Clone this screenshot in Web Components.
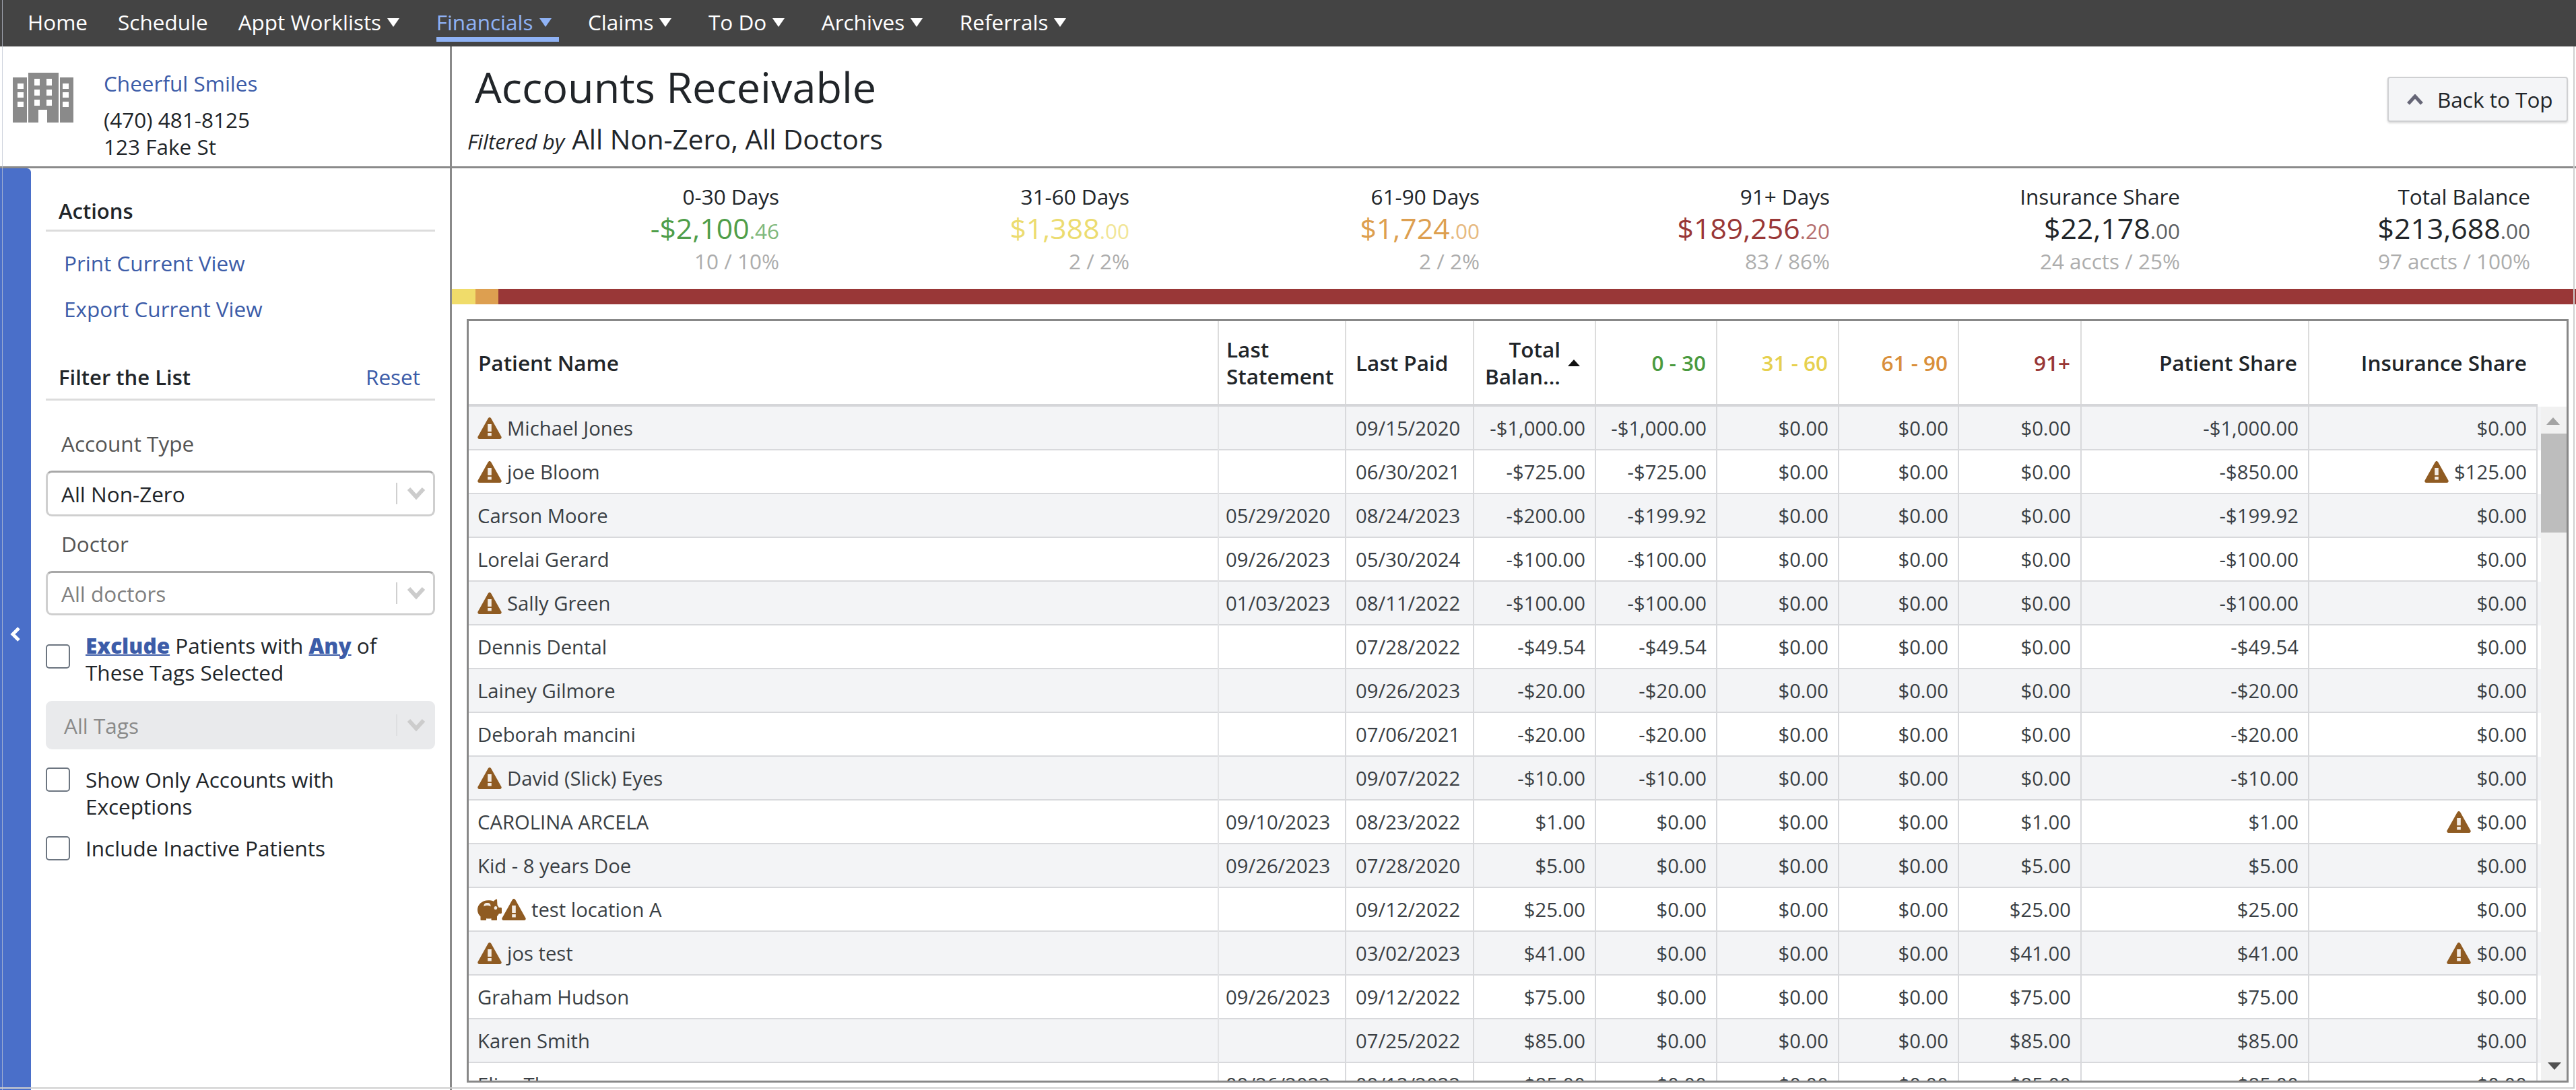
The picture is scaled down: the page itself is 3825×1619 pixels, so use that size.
<!DOCTYPE html>
<html><head><meta charset="utf-8"><title>Accounts Receivable</title>
<style>
html,body{margin:0;padding:0;background:#fff;height:100%;overflow:hidden}
body{font-family:"Open Sans","Noto Sans",sans-serif;font-size:31.5px;color:#212529}
</style></head><body>
<ar-app>
  <ar-nav slot="nav"></ar-nav>
  <ar-practice slot="practice"></ar-practice>
  <ar-title slot="title"></ar-title>
  <ar-sidebar slot="side"></ar-sidebar>
  <ar-summary slot="summary"></ar-summary>
  <ar-table slot="table"></ar-table>
</ar-app>
<script>
const WARN=`<svg viewBox="0 0 36 32" width="36" height="32" style="flex:none;display:block"><path d="M18 0c1 0 1.800.6 2.300 1.500L35.400 28.600c.9 1.700-.2 3.400-2 3.400H2.600c-1.800 0-2.900-1.700-2-3.400L15.700 1.500C16.200.6 17 0 18 0z" fill="#8f5b22"/><rect x="15.200" y="10" width="5.600" height="11" fill="#f3ece4"/><rect x="15.200" y="23" width="5.600" height="4.500" fill="#f3ece4"/></svg>`;
const PIG=`<svg viewBox="0 0 36 32" width="36" height="32" style="flex:none;display:block;margin-right:-8px"><path d="M29 .5c-2.500.5-4 2-5 3.200C21.500 2.600 19 2.200 16 2.200 7 2.200 0 8.500 0 16.200c0 4.200 1.800 7.500 4.500 10V31c0 .6.400 1 1 1h6.500c.6 0 1-.4 1-1v-1.800c2.500.5 5 .5 7.500.1V31c0 .6.400 1 1 1h6.500c.6 0 1-.4 1-1v-5c1.300-1.200 2.300-2.500 3-4h2.500c1 0 1.500-.6 1.500-1.500v-6c0-1-.5-1.500-1.500-1.500h-2.800c-.6-1.400-1.400-2.600-2.200-3.600z" fill="#8f5b22"/><path d="M9.500 11.500c-.5-3.500 1.500-5.500 5-5.500s5.500 2 5 5.500c-2-2-8-2-10 0z" fill="#f3ece4"/><ellipse cx="27" cy="13.500" rx="2.300" ry="2.600" fill="#f3ece4"/></svg>`;
const CHEV=`<svg viewBox="0 0 28 20" width="28" height="20" style="display:block"><path d="M3 3l11 12L25 3" fill="none" stroke="#cccccc" stroke-width="6"/></svg>`;

function def(name,css,html){
  customElements.define(name,class extends HTMLElement{
    constructor(){super();const s=this.attachShadow({mode:'open'});s.innerHTML=`<style>${css}</style>`+(typeof html==='function'?html(this):html);}
  });
}

def('ar-app',`
:host{display:grid;grid-template-columns:671px 1fr;grid-template-rows:69px 181px 1fr;height:1619px;width:3825px;box-sizing:border-box;overflow:hidden;position:relative}
.nav{grid-column:1/3}
.pr{border-right:3px solid #8a8a8a;border-bottom:3px solid #8a8a8a;box-sizing:border-box}
.ti{border-bottom:3px solid #8a8a8a;box-sizing:border-box}
.si{border-right:3px solid #8a8a8a;box-sizing:border-box;min-height:0;overflow:hidden}
.ma{min-height:0;overflow:hidden;display:flex;flex-direction:column}
.edge{position:absolute;pointer-events:none;background:#cfcfcf}
.l{left:3px;top:0;bottom:0;width:1px;background:rgba(190,195,210,.75)}
.r{right:2px;top:69px;bottom:2px;width:2px}
.b{left:0;right:2px;bottom:2px;height:2px}
`,`<div class="nav"><slot name="nav"></slot></div><div class="pr"><slot name="practice"></slot></div><div class="ti"><slot name="title"></slot></div><div class="si"><slot name="side"></slot></div><div class="ma"><slot name="summary"></slot><slot name="table"></slot></div><i class="edge l"></i><i class="edge r"></i><i class="edge b"></i>`);

def('ar-nav',`
:host{display:flex;height:69px;background:#444;color:#fff;padding-left:41px;box-sizing:border-box;font-size:31.5px;align-items:flex-start}
.i{display:flex;align-items:center;height:69px;position:relative;padding-bottom:4px;box-sizing:border-box;margin-right:45px;white-space:nowrap}
.m{padding-right:11px;margin-right:43.5px}
.i i{display:block;width:0;height:0;border-left:9px solid transparent;border-right:9px solid transparent;border-top:13px solid currentColor;margin-left:9px;margin-top:2px}
.a{color:#8fb2f5}
.a::after{content:"";position:absolute;left:0;right:0;top:55px;height:7px;background:#8fb2f5}
`,`<div class="i">Home</div><div class="i">Schedule</div><div class="i m">Appt Worklists<i></i></div><div class="i m a">Financials<i></i></div><div class="i m">Claims<i></i></div><div class="i m">To Do<i></i></div><div class="i m">Archives<i></i></div><div class="i m">Referrals<i></i></div>`);

def('ar-practice',`
:host{display:flex;padding:39px 0 0 19px;box-sizing:border-box;height:178px;font-size:31.5px}
svg{flex:none;display:block;width:90px;height:74px;margin-right:45px}
.t{display:flex;flex-direction:column;line-height:40px;margin-top:-4px}
.n{color:#3c5ca8;margin-bottom:14px}
`,`<svg viewBox="0 0 90 74"><path fill="#8a8a8a" d="M0 7h21v67H0zM23 0h45v74H51V55H38v19H23zM70 7h20v67H70z"/><g fill="#fff"><rect x="7" y="16" width="9" height="8"/><rect x="7" y="29" width="9" height="8"/><rect x="7" y="43" width="9" height="8"/><rect x="74" y="16" width="9" height="8"/><rect x="74" y="29" width="9" height="8"/><rect x="74" y="43" width="9" height="8"/><rect x="32" y="9" width="8" height="10"/><rect x="50" y="9" width="8" height="10"/><rect x="32" y="25" width="8" height="9"/><rect x="50" y="25" width="8" height="9"/><rect x="32" y="40" width="8" height="9"/><rect x="50" y="40" width="8" height="9"/></g></svg><div class="t"><div class="n">Cheerful Smiles</div><div>(470) 481-8125</div><div>123 Fake St</div></div>`);

def('ar-title',`
:host{display:flex;justify-content:space-between;height:178px;box-sizing:border-box;padding:0 12px 0 23px;position:relative}
h1{margin:18px 0 0 11px;font-size:63px;font-weight:400;line-height:84px;color:#212529;white-space:nowrap}
.f{margin-top:11px;display:flex;align-items:baseline;white-space:nowrap;font-size:40.5px;line-height:50px}
.f em{font-size:31.5px;margin-right:11px}
button{all:unset;box-sizing:border-box;display:flex;align-items:center;width:268px;height:67px;margin-top:45px;background:#f4f5f7;border:2px solid #cfd0d2;border-radius:4px;box-shadow:0 2px 3px rgba(0,0,0,.15);font-size:31.5px;color:#212529;padding-left:27px;white-space:nowrap}
svg{width:24px;height:16px;margin-right:21px}
`,`<div><h1>Accounts Receivable</h1><div class="f"><em>Filtered by</em>All Non-Zero, All Doctors</div></div><button><svg viewBox="0 0 24 16"><path d="M2 14L12 3l10 11" fill="none" stroke="#667" stroke-width="5"/></svg>Back to Top</button>`);

def('ar-sidebar',`
:host{display:flex;height:100%;box-sizing:border-box;font-size:31.5px}
.strip{width:46px;flex:none;background:#4a6fc9;border-top-right-radius:6px;display:flex;justify-content:center;padding-top:681px;box-sizing:border-box}
.strip svg{width:16px;height:22px;display:block}
.c{flex:none;width:578px;margin-left:22px;box-sizing:border-box;padding-top:42px}
.h{display:flex;justify-content:space-between;padding:0 22px 0 19px;border-bottom:3px solid #dcdcdc;height:52px;line-height:42px;font-weight:600;color:#212529;box-sizing:border-box;font-size:31px}
.h a{font-weight:400;font-size:31.5px}
a{color:#3c5ca8;text-decoration:none}
.l{display:block;margin-left:27px;line-height:40px}
.lb{margin-left:23px;color:#555;line-height:40px}
.sel{display:flex;align-items:center;height:68px;border:3px solid #cfcfcf;border-top-color:#a8a8a8;border-radius:9px;box-sizing:border-box;padding-left:20px;color:#212529}
.sel span{flex:1}
.sel b{display:block;width:2px;height:32px;background:#d0d0d0;margin-right:14px}
.sel svg{margin-right:11px}
.dis{color:#808080}
.tag{background:#e9eaec;border:0;height:72px;color:#8a8a8a;padding-left:27px}
.tag b{background:#dedfe1;margin-left:0}
.tag svg{margin-right:14px}
.ck{display:grid;grid-template-columns:36px 480px;column-gap:23px;line-height:40px;color:#212529}
.ck i{display:block;width:36px;height:36px;border:2px solid #6c7580;border-radius:5px;box-sizing:border-box;background:#fff;margin-top:2px}
u{font-weight:800;color:#3c5ca8;text-decoration-thickness:2px}
`,`<div class="strip"><svg viewBox="0 0 16 22"><path d="M13 2L4 11l9 9" fill="none" stroke="#fff" stroke-width="5"/></svg></div>
<div class="c">
<div class="h">Actions</div>
<a class="l" style="margin-top:27px">Print Current View</a>
<a class="l" style="margin-top:28px">Export Current View</a>
<div class="h" style="margin-top:60px;height:56px"><span>Filter the List</span><a>Reset</a></div>
<div class="lb" style="margin-top:44px">Account Type</div>
<div class="sel" style="margin-top:20px"><span>All Non-Zero</span><b></b>${CHEV}</div>
<div class="lb" style="margin-top:21px">Doctor</div>
<div class="sel dis" style="margin-top:20px;height:66px"><span>All doctors</span><b></b>${CHEV}</div>
<div class="ck" style="margin-top:25px"><i style="margin-top:18px"></i><div><u>Exclude</u> Patients with <u>Any</u> of These Tags Selected</div></div>
<div class="sel tag" style="margin-top:22px"><span>All Tags</span><b></b>${CHEV}</div>
<div class="ck" style="margin-top:25px"><i></i><div>Show Only Accounts with Exceptions</div></div>
<div class="ck" style="margin-top:22px"><i></i><div>Include Inactive Patients</div></div>
</div>`);

def('ar-summary',`
:host{display:block;flex:none}
.g{display:grid;grid-template-columns:486px repeat(5,520px);height:179px;box-sizing:border-box;padding-top:21px;text-align:right}
.l{font-size:31.5px;line-height:42px;color:#212529}
.a{font-size:42.75px;line-height:51px}
.a small{font-size:31.5px;opacity:.72}
.s{font-size:31.5px;line-height:40px;color:#adadad}
.bar{display:flex;height:23px;background:#993737}
.bar i{display:block}
`,()=>{
 const d=[['0-30 Days','-$2,100','.46','10 / 10%','#4f9e4a'],['31-60 Days','$1,388','.00','2 / 2%','#ecdc70'],['61-90 Days','$1,724','.00','2 / 2%','#dd9f50'],['91+ Days','$189,256','.20','83 / 86%','#993737'],['Insurance Share','$22,178','.00','24 accts / 25%','#212529'],['Total Balance','$213,688','.00','97 accts / 100%','#212529']];
 return `<div class="g">`+d.map(x=>`<div><div class="l">${x[0]}</div><div class="a" style="color:${x[4]}">${x[1]}<small>${x[2]}</small></div><div class="s">${x[3]}</div></div>`).join('')+`</div><div class="bar"><i style="width:35px;background:#f0dc6a"></i><i style="width:34px;background:#dd9f50"></i></div>`;
});

const COLS='1114px 189px 190px 181px 180px 181px 178px 182px 338px 339px';
def('ar-row',`
:host{display:grid;grid-template-columns:${COLS} 5px;width:3077px;height:65px;box-sizing:border-box;font-size:29.25px;color:#3a3f44;background:linear-gradient(#d8d9dc,#d8d9dc) left bottom/3072px 2px no-repeat,var(--bg,#fff)}
div{display:flex;align-items:center;justify-content:flex-end;padding:0 14px 2px;box-sizing:border-box;border-right:2px solid #d8d9dc;white-space:nowrap;gap:8px;overflow:visible}
div:nth-of-type(1),div:nth-of-type(2),div:nth-of-type(3){justify-content:flex-start}
div:nth-of-type(1){padding-left:13px;border-right-color:#e2e3e5}
div:nth-of-type(2){padding-left:10px}
div:last-of-type{border-right:0}
`,(el)=>{
  const d=JSON.parse(el.getAttribute('data'));
  const ic=s=>(s||'').replace('{w}',WARN).replace('{p}',PIG).replace(/>([^<>]+)$/,'><span>$1</span>');
  return d.map(c=>`<div>${ic(c)}</div>`).join('');
});

def('ar-table',`
:host{display:block;margin:22px 11px 0 22px;height:1134px;border:3px solid #888;box-sizing:border-box;overflow:hidden;position:relative;flex:none}
.hd{display:grid;grid-template-columns:${COLS};height:127px;border-bottom:4px solid #d5d6d9;box-sizing:border-box;font-weight:600;font-size:31.5px;line-height:40px;color:#212529;width:3072px}
.hd div{display:flex;align-items:center;padding:0 15px 0 14px;box-sizing:border-box;border-right:2px solid #dcdcdc;justify-content:flex-end;text-align:right}
.hd div.lf{justify-content:flex-start;text-align:left}
.hd div:last-child{border-right:0;padding-right:16px}
.hd svg{margin-left:11px;flex:none}
.body{display:flex;height:1004px;overflow:hidden}
.rows{width:3077px;flex:none}
.sb{flex:1;background:#f1f1f1;position:relative}
.sb .t{position:absolute;left:0;right:0;top:40px;height:147px;background:#bdbdbd}
.sb .u{position:absolute;left:8px;top:16px;width:0;height:0;border-left:10px solid transparent;border-right:10px solid transparent;border-bottom:11px solid #a3a3a3}
.sb .d{position:absolute;left:10px;top:974px;width:0;height:0;border-left:10px solid transparent;border-right:10px solid transparent;border-top:11px solid #505050}
`,()=>{
 const z='$0.00';
 const R=[
 ['{w}Michael Jones','','09/15/2020','-$1,000.00','-$1,000.00',z,z,z,'-$1,000.00',z],
 ['{w}joe Bloom','','06/30/2021','-$725.00','-$725.00',z,z,z,'-$850.00','{w}$125.00'],
 ['Carson Moore','05/29/2020','08/24/2023','-$200.00','-$199.92',z,z,z,'-$199.92',z],
 ['Lorelai Gerard','09/26/2023','05/30/2024','-$100.00','-$100.00',z,z,z,'-$100.00',z],
 ['{w}Sally Green','01/03/2023','08/11/2022','-$100.00','-$100.00',z,z,z,'-$100.00',z],
 ['Dennis Dental','','07/28/2022','-$49.54','-$49.54',z,z,z,'-$49.54',z],
 ['Lainey Gilmore','','09/26/2023','-$20.00','-$20.00',z,z,z,'-$20.00',z],
 ['Deborah mancini','','07/06/2021','-$20.00','-$20.00',z,z,z,'-$20.00',z],
 ['{w}David (Slick) Eyes','','09/07/2022','-$10.00','-$10.00',z,z,z,'-$10.00',z],
 ['CAROLINA ARCELA','09/10/2023','08/23/2022','$1.00',z,z,z,'$1.00','$1.00','{w}$0.00'],
 ['Kid - 8 years Doe','09/26/2023','07/28/2020','$5.00',z,z,z,'$5.00','$5.00',z],
 ['{p}{w}test location A','','09/12/2022','$25.00',z,z,z,'$25.00','$25.00',z],
 ['{w}jos test','','03/02/2023','$41.00',z,z,z,'$41.00','$41.00','{w}$0.00'],
 ['Graham Hudson','09/26/2023','09/12/2022','$75.00',z,z,z,'$75.00','$75.00',z],
 ['Karen Smith','','07/25/2022','$85.00',z,z,z,'$85.00','$85.00',z],
 ['Eliza Thorns','09/26/2023','09/12/2022','$85.00',z,z,z,'$85.00','$85.00',z]];
 const attr=s=>JSON.stringify(s).replace(/"/g,'&quot;');
 const rows=R.map((r,i)=>`<ar-row style="--bg:${i%2?'#fff':'#f3f4f6'}" data="${attr([...r,''])}"></ar-row>`).join('');
 return `<div class="hd"><div class="lf">Patient Name</div><div class="lf" style="padding-left:11px">Last<br>Statement</div><div class="lf">Last Paid</div><div style="padding-right:22px">Total<br>Balan...<svg width="18" height="10" viewBox="0 0 18 10"><path d="M9 0l9 10H0z" fill="#111"/></svg></div><div style="color:#4a9a3f">0 - 30</div><div style="color:#e6d04e">31 - 60</div><div style="color:#d98f3a">61 - 90</div><div style="color:#993737">91+</div><div style="padding-right:16px">Patient Share</div><div>Insurance Share</div></div><div class="body"><div class="rows">${rows}</div><div class="sb"><i class="u"></i><i class="t"></i><i class="d"></i></div></div>`;
});
</script>
</body></html>
